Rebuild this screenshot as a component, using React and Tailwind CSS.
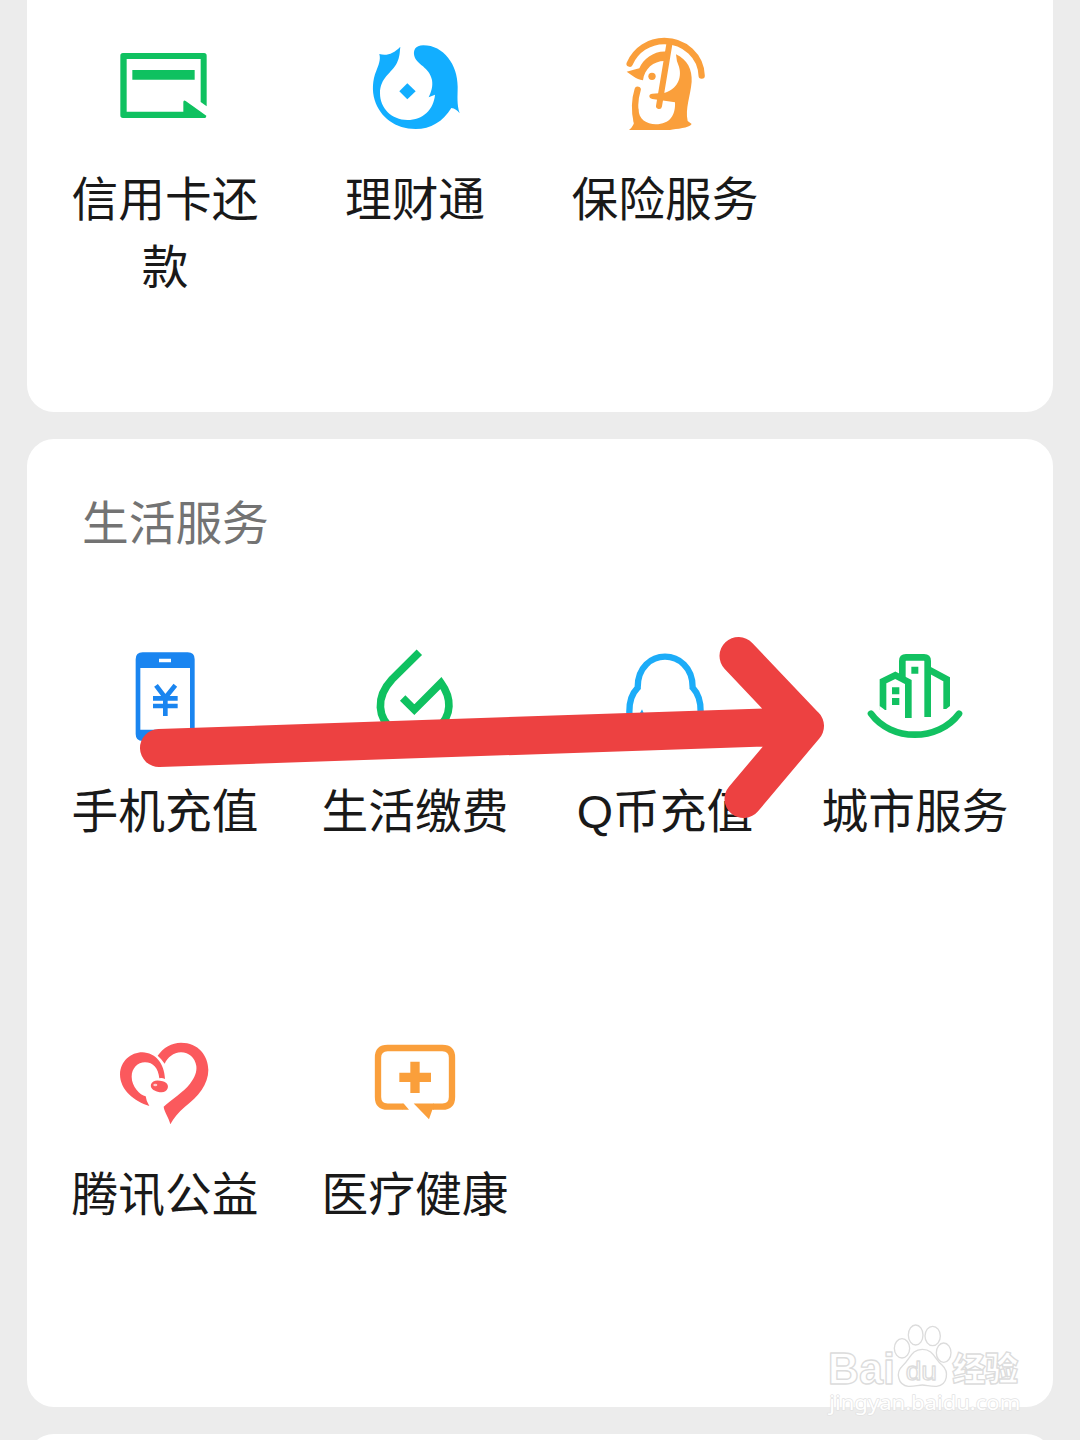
const font = "font-['Liberation_Sans','Noto_Sans_CJK_SC',sans-serif]";

function Icon({ viewBox = "0 0 360 330", color, children }) {
  return (
    <svg viewBox={viewBox} className={`h-[110px] w-[120px] shrink-0 ${color}`} fill="currentColor">
      {children}
    </svg>
  );
}

function CardIcon() {
  return (
    <Icon color="text-[#0fc160]">
      <path
        d="M305 229 V77 Q305 69 297 69 H54 Q46 69 46 77 V256 Q46 264 54 264 H299 Q304 264 304 257 L242 213 Q235 209 235 217 V245 H65 V87 H287 V216 Z"
      />
      <path d="M82 120 H269 V149 H82 Z" />
    </Icon>
  );
}

function FishIcon() {
  return (
    <Icon color="text-[#12aeff]">
      <path d="M73 72 C78 90 70 106 64 122 C52 150 51 182 59 210 C75 262 122 297 182 297 C227 297 264 275 289 234 Q304 236 314 250 C305 222 308 200 308 170 C308 104 266 46 205 46 C180 46 174 62 178 78 C184 103 224 112 231 150 C234 170 229 185 221 202 L240 194 C236 238 204 270 157 270 C110 270 75 235 75 190 C75 142 110 130 126 98 C135 80 134 65 136 50 C115 72 95 78 73 72 Z" />
      <path d="M157 160 L182 184 L157 208 L133 184 Z" />
    </Icon>
  );
}

function PenguinIcon() {
  return (
    <Icon color="text-[#fa9f3b]" viewBox="0 15 360 330">
      <g fill="none" stroke="currentColor" strokeLinecap="round">
        <path d="M74 116 C92 74 132 48 178 48 C240 48 288 94 290 152" strokeWidth="19" />
        <path d="M98 194 C90 220 88 258 95 290" strokeWidth="19" />
        <path d="M194 52 L171 190 L162 243" strokeWidth="18" />
      </g>
      <path d="M213 88 C248 104 262 135 260 170 C256 215 240 250 248 288 L260 297 C252 310 215 311 195 315 H72 Q90 300 86 285 L100 250 C100 283 125 298 152 298 C195 298 212 270 210 232 L142 222 C130 219 130 207 142 206 L180 203 C215 192 232 160 222 125 Q214 110 213 88 Z" />
      <path d="M65 140 Q88 134 103 130 C115 100 150 76 186 80 L182 108 C148 106 118 130 114 166 C92 162 80 150 65 140 Z" />
      <circle cx="141" cy="154" r="11" />
    </Icon>
  );
}

function PhoneIcon() {
  return (
    <Icon color="text-[#1a85f0]" viewBox="-30 21 360 330">
      <path
        fillRule="evenodd"
        d="M83 52 H218 Q239 52 239 73 V297 Q239 318 218 318 H83 Q62 318 62 297 V73 Q62 52 83 52 Z M76 99 V284 H225 V99 Z M132 71 V82 H168 V71 Z"
      />
      <path d="M123 151 L151 188 L181 151 M114 190 H188 M114 213 H188 M151 186 V243" fill="none" stroke="currentColor" strokeWidth="14" />
    </Icon>
  );
}

function DropIcon() {
  return (
    <Icon color="text-[#0fc160]" viewBox="-15 21 360 330">
      <path
        d="M178 52 L96 133 C45 188 53 250 100 285 C138 308 195 308 232 280 C278 242 275 188 243 144 L163 224 L128 189"
        fill="none"
        stroke="currentColor"
        strokeWidth="23"
      />
    </Icon>
  );
}

function QCoinIcon() {
  return (
    <Icon color="text-[#1cacf8]" viewBox="-15 51 360 330">
      <path
        d="M165 95 C205 95 249 126 248 188 C265 206 273 226 272 262 C270 275 262 285 255 280 C240 325 90 325 75 280 C65 285 58 270 58 262 C57 226 65 206 83 188 C82 126 125 95 165 95 Z"
        fill="none"
        stroke="currentColor"
        strokeWidth="19"
      />
      <path d="M90 264 L96 253 L101 264 Z" />
    </Icon>
  );
}

function CityIcon() {
  return (
    <Icon color="text-[#12c161]" viewBox="0 21 360 330">
      <g fill="none" stroke="currentColor" strokeWidth="20">
        <path d="M84 225 V139 L121 121 L160 141 V249" />
        <path d="M142 130 V78 Q142 67 153 67 H207 Q218 67 218 78 V246" />
        <path d="M220 103 L275 133 V222" />
        <path d="M48 236 C108 320 250 320 312 236" strokeLinecap="round" />
      </g>
      <path d="M73 212 L95 229 H73 Z M265 229 L286 212 V229 Z" fill="#fff" />
      <path d="M169 95 H190 V116 H169 Z M111 157 H133 V178 H111 Z M111 189 H133 V210 H111 Z" />
    </Icon>
  );
}

function HeartIcon() {
  return (
    <Icon color="text-[#fb595d]">
      <path d="M133 243 C88 230 45 195 45 148 C46 108 78 82 112 82 C152 84 178 115 180 162 Q171 158 163 160 C160 130 145 112 120 112 C98 112 80 130 80 155 C80 185 105 210 122 214 Q124 230 133 243 Z" />
      <path d="M158 92 C175 68 200 53 228 53 C280 53 310 92 310 135 C310 178 280 215 240 245 C220 262 205 280 196 298 C193 280 178 262 176 245 C200 222 235 202 255 176 C270 157 276 140 274 123 C270 98 252 82 228 82 C205 82 188 98 179 116 Q170 102 158 92 Z" />
      <path d="M138 178 C142 165 158 164 173 169 C187 173 191 182 188 190 C184 203 170 204 158 200 C145 197 135 190 138 178 Z" />
      <ellipse cx="151" cy="180" rx="6" ry="4" fill="#fff" opacity="0.7" />
    </Icon>
  );
}

function MedicalIcon() {
  return (
    <Icon color="text-[#fa9f3b]">
      <path
        d="M142 245 H98 Q69 245 69 216 V98 Q69 69 98 69 H262 Q291 69 291 98 V216 Q291 245 262 245 H234"
        fill="none"
        stroke="currentColor"
        strokeWidth="19"
      />
      <path d="M141 235.500 H146 L162 254.500 H141 Z M176 235.500 H236 V254.500 H232 L222 283 Z" />
      <path d="M166 110 H194 V143 H228 V171 H194 V204 H166 V171 H133 V143 H166 Z" />
    </Icon>
  );
}

const finance = [
  { label: "信用卡还款", icon: CardIcon },
  { label: "理财通", icon: FishIcon },
  { label: "保险服务", icon: PenguinIcon },
];

const life = [
  { label: "手机充值", icon: PhoneIcon },
  { label: "生活缴费", icon: DropIcon },
  { label: "Q币充值", icon: QCoinIcon },
  { label: "城市服务", icon: CityIcon },
  { label: "腾讯公益", icon: HeartIcon },
  { label: "医疗健康", icon: MedicalIcon },
];

function ServiceGrid({ items }) {
  return (
    <div className="grid auto-rows-[383px] grid-cols-[repeat(4,250px)] pl-[13px]">
      {items.map(({ label, icon: Glyph }) => (
        <div key={label} className="flex flex-col items-center">
          <Glyph />
          <div className="mt-[26px] w-[190px] text-center text-[46.7px] leading-[68px] text-[#191919]">
            {label}
          </div>
        </div>
      ))}
    </div>
  );
}

// Hand-drawn arrow pointing at the city services entry
function Arrow() {
  return (
    <svg viewBox="0 0 1080 1440" className="pointer-events-none absolute inset-0 h-full w-full">
      <path
        d="M159 748 L805 726 M738.500 656 L805 726 L743.500 799"
        fill="none"
        stroke="#ed4141"
        strokeWidth="38"
        strokeLinecap="round"
        strokeLinejoin="round"
      />
    </svg>
  );
}

function Watermark() {
  return (
    <svg viewBox="0 0 810 390" className="pointer-events-none absolute bottom-0 right-0 h-[130px] w-[270px]">
      <g fill="#fff" stroke="#dcdcdc" strokeWidth="4" strokeLinejoin="round">
        <text x="53" y="223" fontSize="132" fontWeight="700" textLength="202" lengthAdjust="spacingAndGlyphs" fontFamily="Liberation Sans, sans-serif">
          Bai
        </text>
        <ellipse cx="276" cy="115" rx="23" ry="29" />
        <ellipse cx="317" cy="75" rx="22" ry="30" />
        <ellipse cx="368" cy="78" rx="23" ry="29" />
        <ellipse cx="401" cy="128" rx="22" ry="29" />
        <path d="M337 118 C372 118 373 148 396 165 C418 185 413 225 380 229 C360 230 350 225 337 225 C324 225 314 230 295 229 C263 225 256 187 278 167 C301 148 303 118 337 118 Z" />
        <text x="287" y="211" fontSize="80" textLength="94" lengthAdjust="spacingAndGlyphs" fontFamily="Liberation Sans, sans-serif">
          du
        </text>
        <text x="427" y="214" fontSize="100" fontWeight="900" textLength="198" fontFamily="Noto Sans CJK SC, sans-serif">
          经验
        </text>
        <text x="58" y="299" fontSize="62" stroke="#e2e2e2" paintOrder="stroke" textLength="573" lengthAdjust="spacingAndGlyphs" fontFamily="Noto Sans, sans-serif">
          jingyan.baidu.com
        </text>
      </g>
    </svg>
  );
}

export default function App() {
  return (
    <div className={`relative flex h-[1440px] w-[1080px] flex-col gap-[27px] overflow-hidden bg-[#ececec] px-[27px] ${font}`}>
      <section className="h-[412px] shrink-0 overflow-hidden rounded-b-[27px] bg-white pt-[30px]">
        <ServiceGrid items={finance} />
      </section>

      <section className="h-[968px] shrink-0 overflow-hidden rounded-[27px] bg-white pt-[51px]">
        <h2 className="mb-[84px] pl-[55px] text-[46.7px] leading-[68px] text-[#737373]">生活服务</h2>
        <ServiceGrid items={life} />
      </section>

      <section className="h-[200px] shrink-0 rounded-t-[27px] bg-white" />

      <Arrow />
      <Watermark />
    </div>
  );
}
